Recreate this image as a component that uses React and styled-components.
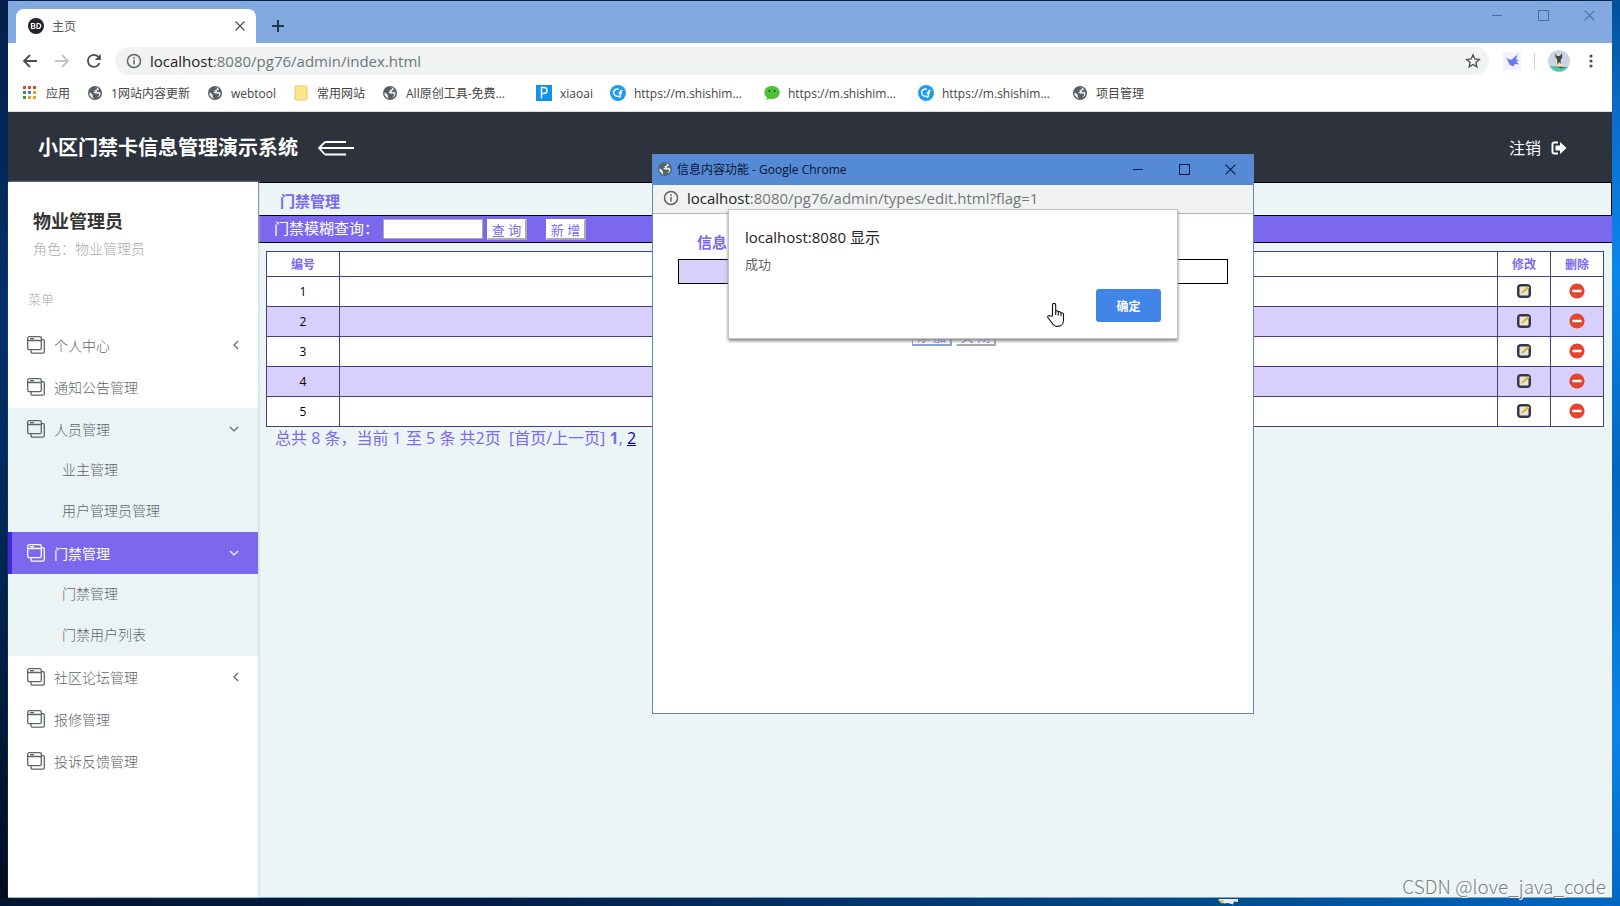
import React from 'react';
import styled, { createGlobalStyle, css } from 'styled-components';

const Global = createGlobalStyle`
  * { box-sizing: border-box; }
  body {
    margin: 0;
    font-family: "Open Sans", "Noto Sans CJK SC", sans-serif;
    font-size: 14px;
    color: #333;
  }
  button, input { font-family: inherit; margin: 0; }
  a { color: inherit; text-decoration: none; }
`;

const Desktop = styled.div`
  position: relative;
  min-height: 100vh;
  padding: 1px 8px 8px;
  display: flex;
  background:
    linear-gradient(90deg, #01142f 0%, #021d45 30%, #014a8c 75%, #0068c4 100%) bottom / 100% 8px no-repeat,
    linear-gradient(180deg, #01509a 0%, #0a6cc8 12%, #0a86ee 30%, #0266bd 52%, #0a84ea 80%, #0268c4 100%) right / 8px 100% no-repeat,
    linear-gradient(180deg, #04204a 0%, #01306a 35%, #01244f 65%, #010c20 100%);
`;

const Browser = styled.div`
  flex: 1;
  display: flex;
  flex-direction: column;
  background: #fff;
  border-bottom: 1px solid #7fa6cc;
`;

const TabStrip = styled.div`
  height: 42px;
  display: flex;
  align-items: flex-end;
  padding-left: 8px;
  background: #83aae0;
`;

const Tab = styled.div`
  width: 240px;
  height: 34px;
  display: flex;
  align-items: center;
  gap: 8px;
  padding: 0 11px 0 12px;
  border-radius: 8px 8px 0 0;
  background: #fff;
  font-size: 12px;
  color: #555;
  span { flex: 1; }
`;

const BareButton = styled.button`
  display: flex;
  align-items: center;
  justify-content: center;
  padding: 0;
  border: 0;
  background: none;
  color: inherit;
`;

const NewTab = styled(BareButton)`
  width: 28px;
  height: 34px;
  margin-left: 8px;
  color: #26364d;
`;

const WindowControls = styled.div`
  display: flex;
  align-self: flex-start;
  margin-left: auto;
  color: ${p => p.$color};
  button { width: ${p => p.$step}px; height: ${p => p.$height}px; }
`;

const Toolbar = styled.div`
  display: flex;
  align-items: center;
  height: 36px;
  padding: 0 13px 0 14px;
  color: #55585c;
`;

const NavButtons = styled.div`
  display: flex;
  gap: 16px;
  margin-right: 13px;
`;

const AddressBar = styled.div`
  flex: 1;
  height: 28px;
  display: flex;
  align-items: center;
  gap: 8px;
  padding: 0 8px 0 11px;
  border-radius: 14px;
  background: #f1f3f3;
`;

const Url = styled.span`
  flex: 1;
  font-size: 15px;
  line-height: 20px;
  color: #70757a;
  b { font-weight: 400; color: #222; }
`;

const ToolbarEnd = styled.div`
  display: flex;
  align-items: center;
  gap: 13px;
  margin-left: 14px;
`;

const Divider = styled.i`
  width: 1px;
  height: 16px;
  background: #ccc;
`;

const Bookmarks = styled.nav`
  display: flex;
  align-items: center;
  gap: 17px;
  height: 33px;
  padding: 0 14px 4px;
  font-size: 12px;
  color: #444;
  border-bottom: 1px solid #dedede;
`;

const Bookmark = styled.a`
  display: flex;
  align-items: center;
  gap: 8px;
  white-space: nowrap;
  svg { flex: none; }
  span { ${p => p.$long && css`width: 113px;`} }
`;

const AppHeader = styled.header`
  display: flex;
  align-items: center;
  height: 70px;
  padding: 2px 45px 0 30px;
  background: #2e323c;
  color: #fff;
`;

const AppTitle = styled.h1`
  margin: 0 20px 0 0;
  font-size: 20px;
  line-height: 28px;
  font-weight: 700;
`;

const Logout = styled.a`
  display: flex;
  align-items: center;
  gap: 10px;
  margin-left: auto;
  font-size: 16px;
  line-height: 24px;
`;

const AppBody = styled.div`
  flex: 1;
  display: flex;
`;

const Sidebar = styled.aside`
  width: 250px;
  flex: none;
  background: #fff;
  box-shadow: 1px 0 2px #ccd6d8;
  z-index: 1;
`;

const Profile = styled.div`
  padding: 25px 25px 0;
  height: 104px;
  h2 { margin: 0; font-size: 18px; line-height: 28px; color: #333; }
  p { margin: 0; font-size: 14px; line-height: 28px; color: #aaa; font-weight: 300; }
`;

const MenuLabel = styled.div`
  height: 38px;
  padding: 3px 20px;
  font-size: 13px;
  line-height: 20px;
  font-weight: 300;
  color: #aaa;
`;

const MenuGroup = styled.div`
  background: ${p => (p.$open ? '#eaf4f5' : '#fff')};
`;

const MenuItem = styled.a`
  display: flex;
  align-items: center;
  gap: 9px;
  height: 42px;
  padding: 0 19px 0 ${p => (p.$active ? 15 : 19)}px;
  font-weight: ${p => (p.$active ? 400 : 300)};
  color: ${p => (p.$active ? '#fff' : '#5d6468')};
  ${p => p.$active && css`background: #7b68ee; border-left: 4px solid #4526dc;`}
  span { flex: 1; }
`;

const SubItem = styled.a`
  display: block;
  height: 41px;
  padding-left: 54px;
  line-height: 39px;
  font-weight: 300;
  color: #5d6468;
`;

const Content = styled.main`
  flex: 1;
  min-width: 0;
  background: #ebf5f5;
`;

const PageTitle = styled.h3`
  margin: 0;
  height: 33px;
  padding: 3px 0 0 21px;
  border: 1px solid #000;
  border-bottom: 0;
  font-size: 15px;
  line-height: 30px;
  color: #7b68ee;
`;

const SearchRow = styled.form`
  display: flex;
  align-items: center;
  height: 28px;
  padding-left: 15px;
  border: 1px solid #000;
  border-right: 0;
  background: #7b68ee;
  color: #fff;
  label { height: 22px; font-size: 15px; line-height: 20px; }
  input {
    width: 100px;
    height: 20px;
    margin: 0 4px;
    border: 1px solid #aaa;
    background: #fff;
  }
`;

const SmallButton = styled.button`
  width: 40px;
  height: 21px;
  margin-right: ${p => p.$gap || 0}px;
  padding: 0;
  border: 1px solid ${p => (p.$focus ? '#8aa0d0' : '#fff')};
  border-right: 2px solid ${p => (p.$focus ? '#8aa0d0' : '#aaa')};
  border-bottom: 2px solid ${p => (p.$focus ? '#8aa0d0' : '#aaa')};
  background: #fff;
  font-size: 13px;
  line-height: 20px;
  color: #7b68ee;
`;

const DataTable = styled.table`
  width: calc(100% - 16px);
  margin: 8px 8px 0;
  table-layout: fixed;
  border-collapse: collapse;
  background: #fff;
  font-size: 12px;
  text-align: center;
  th, td { padding: 0; border: 1px solid #483d82; }
  th { height: 25px; color: #7b68ee; }
  td { height: 30px; color: #000; }
  tbody tr:nth-child(even) { background: #d8d0fc; }
  button { margin: 0 auto 2px; }
`;

const Pager = styled.div`
  padding: 0 17px;
  font-size: 16px;
  line-height: 22px;
  color: #7b68ee;
  white-space: pre;
  a { color: #0000c8; text-decoration: underline; }
`;

const Popup = styled.section`
  position: absolute;
  left: 652px;
  top: 154px;
  z-index: 2;
  width: 602px;
  height: 560px;
  border: 1px solid #6088c0;
  background: #fff;
`;

const PopupTitle = styled.div`
  display: flex;
  align-items: center;
  gap: 4px;
  height: 30px;
  padding: 0 0 2px 4px;
  background: #558bd6;
  font-size: 12px;
  color: #0a1330;
`;

const PopupAddress = styled.div`
  display: flex;
  align-items: center;
  gap: 8px;
  height: 29px;
  padding: 0 10px 2px;
  border-bottom: 1px solid #b5b5b5;
  background: #f1f3f3;
  color: #5f6368;
`;

const EditForm = styled.form`
  padding: 18px 25px;
  h4 { margin: 0 0 7px 19px; font-size: 15px; line-height: 20px; color: #7b68ee; }
`;

const FieldRow = styled.div`
  height: 25px;
  display: flex;
  border: 1px solid #000;
  i { width: 25%; background: #d8d0fc; }
`;

const FormButtons = styled.div`
  display: flex;
  justify-content: center;
  gap: 4px;
  margin: 41px 0 0 2px;
`;

const Alert = styled.div`
  position: absolute;
  left: 75px;
  top: 54px;
  width: 450px;
  height: 130px;
  padding: 16px;
  display: flex;
  flex-direction: column;
  border: 1px solid #c4c4c4;
  background: #fff;
  box-shadow: 0 2px 3px #888;
  h5 { margin: 0; font-size: 15px; line-height: 22px; font-weight: 400; color: #222; }
  p { margin: 6px 0 0; font-size: 13px; line-height: 20px; color: #5f6368; }
`;

const OkButton = styled.button`
  align-self: flex-end;
  width: 65px;
  height: 33px;
  margin-top: auto;
  padding: 0;
  border: 0;
  border-radius: 3px;
  background: #4285e8;
  color: #fff;
  font-size: 12px;
  font-weight: 700;
`;

const Pointer = styled.svg`
  position: absolute;
  left: 1046px;
  top: 302px;
  z-index: 3;
`;

const TaskbarIcon = styled.svg`
  position: absolute;
  left: 1217px;
  bottom: 0;
`;

const Watermark = styled.div`
  position: absolute;
  right: 14px;
  bottom: 6px;
  font-family: "Noto Sans CJK SC", sans-serif;
  font-size: 19px;
  line-height: 28px;
  font-weight: 300;
  color: #7c8082;
  text-shadow: 1px 1px 0 #fff;
`;

const Globe = ({ color = '#5a5d61' }) => (
  <svg width="16" height="16" viewBox="0 0 16 16">
    <circle cx="8" cy="8" r="7" fill={color} />
    <path d="M2.6 7.2 5.6 9.4 6 12.6 7.4 13.6 5 13 2.4 10Z M7 2.4 10.2 2.6 9.6 4.4 7.4 5.2 8 6.8 6 7.2 8.6 8.8 11.6 8.6 12.2 10 10 12.8 12.8 11 13.6 8 12 6.6 10.4 7.4 9.6 6 12.2 4.2 10 2.2Z" fill="#e9eef0" />
  </svg>
);

const Info = () => (
  <svg width="16" height="16" viewBox="0 0 16 16" fill="none" stroke="#5f6368" strokeWidth="1.5">
    <circle cx="8" cy="8" r="6.5" />
    <path d="M8 7v4.5M8 4.3v1.6" />
  </svg>
);

const AppsIcon = () => {
  const colors = ['#d9463a', '#d9463a', '#d9463a', '#3c9a52', '#3f7fd8', '#e0a52a', '#3c9a52', '#e0a52a', '#e0a52a'];
  return (
    <svg width="16" height="16" viewBox="0 0 16 16">
      {colors.map((c, i) => <rect key={i} x={1 + (i % 3) * 5} y={1 + Math.floor(i / 3) * 5} width="3" height="3" fill={c} />)}
    </svg>
  );
};

const Folder = () => (
  <svg width="16" height="16" viewBox="0 0 16 16"><rect x="2" y="1" width="12" height="14" rx="1" fill="#fbe68c" stroke="#e4c964" /></svg>
);

const PIcon = () => (
  <svg width="16" height="16" viewBox="0 0 16 16">
    <rect width="16" height="16" fill="#1592e8" />
    <path d="M5.5 13.5v-11H8a3 3 0 0 1 0 6H5.5" fill="none" stroke="#fff" strokeWidth="1.4" />
  </svg>
);

const CIcon = () => (
  <svg width="16" height="16" viewBox="0 0 16 16">
    <circle cx="8" cy="8" r="8" fill="#1f9cf0" />
    <path d="M8.8 4.4A3.6 3.6 0 1 0 8.4 11M12.6 5.6C10.8 5 10.4 6 10.4 7.4V10c0 1.6-.6 2.2-1.6 2.2M8.6 8H12" fill="none" stroke="#fff" strokeWidth="1.5" />
  </svg>
);

const ChatIcon = () => (
  <svg width="16" height="16" viewBox="0 0 16 16">
    <path d="M8 1C3.600 1 .3 3.700.3 7.400c0 2 1 3.700 2.700 4.900L2.500 15l3-1.300c.8.2 1.600.3 2.500.3 4.400 0 7.700-2.900 7.700-6.600S12.400 1 8 1Z" fill="#4dc136" />
    <circle cx="5.300" cy="6" r="1" fill="#1e5a16" /><circle cx="10.700" cy="6" r="1" fill="#1e5a16" />
  </svg>
);

const CloseIcon = ({ size = 10, width = 1 }) => (
  <svg width={size} height={size} viewBox="0 0 10 10" stroke="currentColor" strokeWidth={width}><path d="M.5.5l9 9M9.500.5l-9 9" /></svg>
);

const Controls = ({ color, step, height }) => (
  <WindowControls $color={color} $step={step} $height={height}>
    <BareButton type="button" aria-label="最小化"><svg width="12" height="10" stroke="currentColor"><path d="M1 5.5h10" /></svg></BareButton>
    <BareButton type="button" aria-label="最大化"><svg width="11" height="11" fill="none" stroke="currentColor"><path d="M.5.5h10v10H.5Z" /></svg></BareButton>
    <BareButton type="button" aria-label="关闭窗口"><CloseIcon size={11} /></BareButton>
  </WindowControls>
);

const WindowsIcon = () => (
  <svg width="18" height="18" viewBox="0 0 18 18" fill="none" stroke="currentColor" strokeWidth="1.300">
    <rect x=".7" y=".7" width="13.600" height="13" rx="1.500" />
    <path d="M.7 4.500h13.600M3 2.700h4M14.300 3.700H16a1.300 1.300 0 0 1 1.300 1.300v10.700a1.500 1.500 0 0 1-1.500 1.500H5.500A1.500 1.500 0 0 1 4 15.700v-2" />
  </svg>
);

const Chevron = ({ down }) => (
  <svg width="10" height="10" viewBox="0 0 10 10" fill="none" stroke="currentColor" strokeWidth="1.200">
    <path d={down ? 'M1 3l4 4 4-4' : 'M9 1 5 5l4 4'} />
  </svg>
);

const EditIcon = () => (
  <svg width="16" height="16" viewBox="0 0 16 16">
    <rect x="1" y="1" width="14" height="14" rx="4" fill="#34374a" />
    <rect x="3.500" y="3.500" width="9" height="9" rx="1" fill="#ebe6dc" />
    <path d="M5 10.800 6 8.600 12.200 3 13.800 4.600 7.400 10Z" fill="#d3b537" />
  </svg>
);

const DeleteIcon = () => (
  <svg width="16" height="16" viewBox="0 0 16 16">
    <circle cx="8" cy="8" r="7.600" fill="#e4452f" />
    <rect x="3.500" y="6.700" width="9" height="2.600" rx=".6" fill="#fff" />
  </svg>
);

const bookmarks = [
  { icon: <AppsIcon />, text: '应用' },
  { icon: <Globe />, text: '1网站内容更新' },
  { icon: <Globe />, text: 'webtool' },
  { icon: <Folder />, text: '常用网站' },
  { icon: <Globe />, text: 'All原创工具-免费...', long: true },
  { icon: <PIcon />, text: 'xiaoai' },
  { icon: <CIcon />, text: 'https://m.shishim...', long: true },
  { icon: <ChatIcon />, text: 'https://m.shishim...', long: true },
  { icon: <CIcon />, text: 'https://m.shishim...', long: true },
  { icon: <Globe />, text: '项目管理' },
];

const menu = [
  { text: '个人中心', more: true },
  { text: '通知公告管理' },
  { text: '人员管理', items: ['业主管理', '用户管理员管理'] },
  { text: '门禁管理', active: true, items: ['门禁管理', '门禁用户列表'] },
  { text: '社区论坛管理', more: true },
  { text: '报修管理' },
  { text: '投诉反馈管理' },
];

export default function App() {
  return (
    <Desktop>
      <Global />
      <Browser>
        <TabStrip>
          <Tab>
            <svg width="16" height="16" viewBox="0 0 16 16">
              <circle cx="8" cy="8" r="8" fill="#22252e" />
              <path d="M3.500 5.500v5h2.200a1.200 1.200 0 0 0 0-2.500H3.500h2a1.200 1.200 0 0 0 0-2.500ZM9 5.500v5h1.200a2.500 2.500 0 0 0 0-5Z" fill="none" stroke="#fff" strokeWidth="1.200" />
            </svg>
            <span>主页</span>
            <BareButton type="button" aria-label="关闭标签页"><CloseIcon width={1.3} /></BareButton>
          </Tab>
          <NewTab type="button" aria-label="新标签页">
            <svg width="12" height="12" stroke="currentColor" strokeWidth="2"><path d="M0 6h12M6 0v12" /></svg>
          </NewTab>
          <Controls color="#4a6aa0" step={46} height={28} />
        </TabStrip>

        <Toolbar>
          <NavButtons>
            <BareButton type="button" aria-label="后退">
              <svg width="16" height="16" fill="none" stroke="#4a4d51" strokeWidth="1.800"><path d="M15 8H2M8 2 2 8l6 6" /></svg>
            </BareButton>
            <BareButton type="button" aria-label="前进">
              <svg width="16" height="16" fill="none" stroke="#c0c2c4" strokeWidth="1.800"><path d="M1 8h13M8 2l6 6-6 6" /></svg>
            </BareButton>
            <BareButton type="button" aria-label="重新加载">
              <svg width="16" height="16" fill="none" stroke="#4a4d51" strokeWidth="1.800"><path d="M13.500 10A6 6 0 1 1 12.400 3.900" /><path d="M14.800 1v6h-6Z" fill="#4a4d51" stroke="none" /></svg>
            </BareButton>
          </NavButtons>
          <AddressBar>
            <Info />
            <Url><b>localhost</b>:8080/pg76/admin/index.html</Url>
            <BareButton type="button" aria-label="收藏">
              <svg width="16" height="16" viewBox="0 0 16 16" fill="none" stroke="#4a4d51" strokeWidth="1.300"><path d="M8 1.800 9.800 6l4.500.4-3.400 3 1 4.400L8 11.500l-3.900 2.300 1-4.400-3.400-3L6.200 6Z" /></svg>
            </BareButton>
          </AddressBar>
          <ToolbarEnd>
            <svg width="18" height="18" viewBox="0 0 18 18">
              <rect width="18" height="18" fill="#f2efff" />
              <path d="M3 5.500 6 7.500 8.800 7.500 14.500 2.500 13 7.500 16 8 13.500 9.500 16 12.500 12 12 10 14.500 6.500 12.500 5 9Z" fill="#6478f2" />
            </svg>
            <Divider />
            <svg width="22" height="22" viewBox="0 0 22 22">
              <circle cx="11" cy="11" r="11" fill="#cdd2e8" />
              <path d="M1.500 16A11 11 0 0 0 20 17Z" fill="#45cbb0" />
              <path d="M8.500 8.500h4l.5 4 2 2.500 4 2-9 .8-2.500-1.800Z" fill="#eadfc8" />
              <path d="M7 3l2 3h3l2-3 .3 4-1.800 3.500L13 14l-2-2-1.500 3-.5-6-1.500-2ZM6 16.500l13 .5-6 1.300Z" fill="#47443f" />
            </svg>
            <BareButton type="button" aria-label="菜单">
              <svg width="16" height="16" fill="#4a4d51"><circle cx="8" cy="3" r="1.600" /><circle cx="8" cy="8" r="1.600" /><circle cx="8" cy="13" r="1.600" /></svg>
            </BareButton>
          </ToolbarEnd>
        </Toolbar>

        <Bookmarks>
          {bookmarks.map((b, i) => (
            <Bookmark key={i} href="#" $long={b.long}>{b.icon}<span>{b.text}</span></Bookmark>
          ))}
        </Bookmarks>

        <AppHeader>
          <AppTitle>小区门禁卡信息管理演示系统</AppTitle>
          <BareButton type="button" aria-label="收起菜单">
            <svg width="36" height="18" fill="none" stroke="#fff" strokeWidth="1.800"><path d="M7 3h21M1 9h35M7 15.500h21M7 3 1 9l6 6.500" /></svg>
          </BareButton>
          <Logout href="#">
            注销
            <svg width="16" height="14" viewBox="0 0 16 14">
              <path d="M7 1.500H3A1.500 1.500 0 0 0 1.500 3v8A1.500 1.500 0 0 0 3 12.500h4" fill="none" stroke="#fff" strokeWidth="2" />
              <path d="M9 1l6.500 6L9 13V9.500H4.500v-5H9Z" fill="#fff" />
            </svg>
          </Logout>
        </AppHeader>

        <AppBody>
          <Sidebar>
            <Profile>
              <h2>物业管理员</h2>
              <p>角色：物业管理员</p>
            </Profile>
            <MenuLabel>菜单</MenuLabel>
            {menu.map((m, i) => (
              <MenuGroup key={i} $open={!!m.items}>
                <MenuItem href="#" $active={m.active}>
                  <WindowsIcon />
                  <span>{m.text}</span>
                  {(m.more || m.items) && <Chevron down={!!m.items} />}
                </MenuItem>
                {m.items && m.items.map(t => <SubItem key={t} href="#">{t}</SubItem>)}
              </MenuGroup>
            ))}
          </Sidebar>

          <Content>
            <PageTitle>门禁管理</PageTitle>
            <SearchRow>
              <label htmlFor="query">门禁模糊查询：</label>
              <input id="query" type="text" />
              <SmallButton type="button" $gap={19}>查 询</SmallButton>
              <SmallButton type="button">新 增</SmallButton>
            </SearchRow>
            <DataTable>
              <colgroup>
                <col width="73" />
                <col />
                <col width="53" />
                <col width="53" />
              </colgroup>
              <thead>
                <tr><th>编号</th><th /><th>修改</th><th>删除</th></tr>
              </thead>
              <tbody>
                {[1, 2, 3, 4, 5].map(n => (
                  <tr key={n}>
                    <td>{n}</td>
                    <td />
                    <td><BareButton type="button" aria-label="修改"><EditIcon /></BareButton></td>
                    <td><BareButton type="button" aria-label="删除"><DeleteIcon /></BareButton></td>
                  </tr>
                ))}
              </tbody>
            </DataTable>
            <Pager>总共 8 条，当前 1 至 5 条 共2页  [首页/上一页] <b>1</b>, <a href="#">2</a></Pager>
          </Content>
        </AppBody>
      </Browser>

      <Popup>
        <PopupTitle>
          <Globe color="#55646c" />
          <span>信息内容功能 - Google Chrome</span>
          <Controls color="#0a1340" step={46} height={28} />
        </PopupTitle>
        <PopupAddress>
          <Info />
          <Url><b>localhost</b>:8080/pg76/admin/types/edit.html?flag=1</Url>
        </PopupAddress>
        <EditForm>
          <h4>信息</h4>
          <FieldRow><i /></FieldRow>
          <FormButtons>
            <SmallButton type="button" $focus>添 加</SmallButton>
            <SmallButton type="button">关 闭</SmallButton>
          </FormButtons>
        </EditForm>
        <Alert role="alertdialog" aria-labelledby="alert-title">
          <h5 id="alert-title">localhost:8080 显示</h5>
          <p>成功</p>
          <OkButton type="button">确定</OkButton>
        </Alert>
      </Popup>

      <Pointer width="20" height="26" viewBox="0 0 20 26">
        <path d="M6.500 14V3a1.600 1.600 0 0 1 3.200 0v6.200c.8-.8 2.400-.4 2.600.8.800-.7 2.400-.3 2.600 1 1-.6 2.600 0 2.600 1.600v5.600c0 3.600-2.400 6.200-6 6.200-3 0-4.500-1.500-6-4.200L1.800 15.500c-.6-1.400 1-2.400 2.200-1.500Z M9.700 9v4M12.300 10v3.500M14.900 11v3" fill="#fff" stroke="#111" strokeWidth="1.100" />
      </Pointer>
      <TaskbarIcon width="22" height="7" viewBox="0 0 22 7">
        <path d="M1 0h20v3l-4-.5-1 3-5-1.500-4 .5Z" fill="#e8eef2" />
        <path d="M1 1h6L5 5Z" fill="#d9c94e" />
      </TaskbarIcon>
      <Watermark>CSDN @love_java_code</Watermark>
    </Desktop>
  );
}
